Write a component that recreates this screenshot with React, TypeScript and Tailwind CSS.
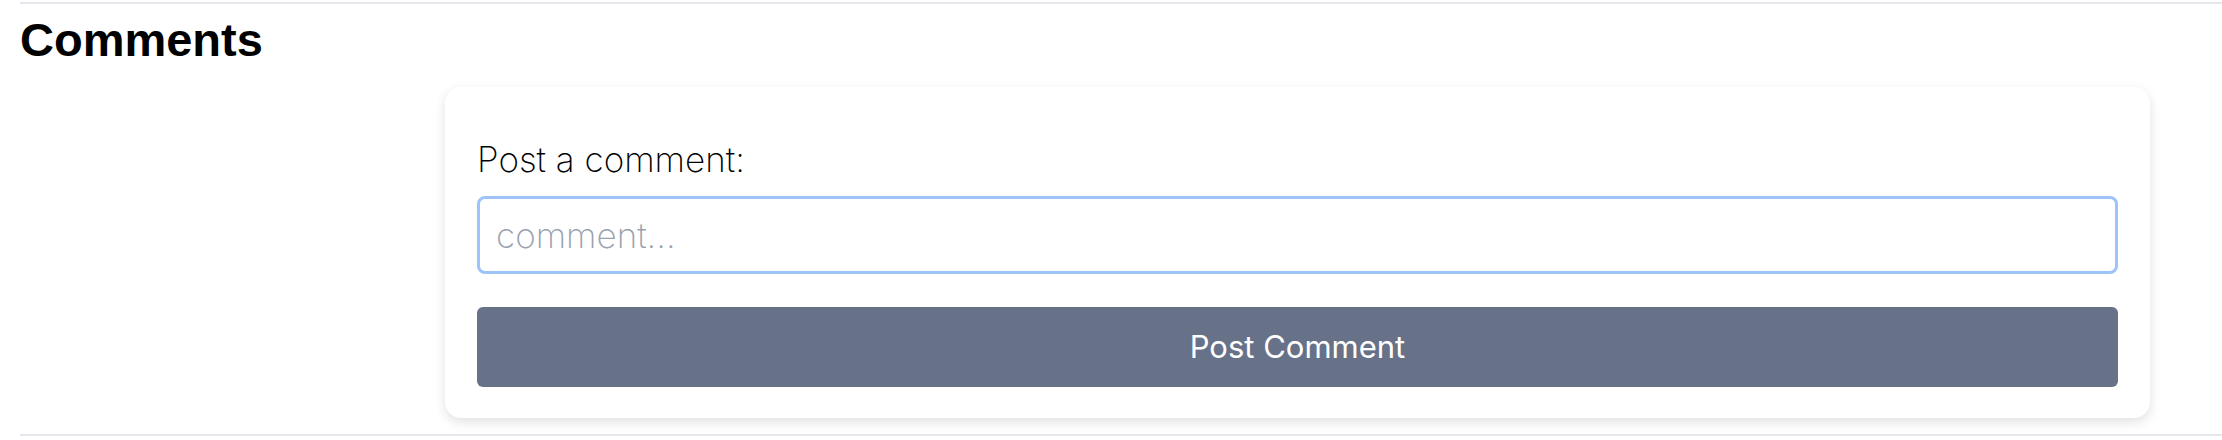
import { useState } from "react";

export default function App() {
  const [comment, setComment] = useState("");

  return (
    <div className="min-h-[440px] bg-white pt-[2px] pl-5">
      <div className="border-t-2 border-[#e6e6ec]" />
      <h2 className="mt-3 text-[47px] font-bold leading-none text-black font-['Liberation_Sans',Arial,sans-serif]">
        Comments
      </h2>

      {/* comment form card */}
      <div className="mt-6 ml-[425px] mr-[72px] rounded-2xl bg-white px-8 pt-[55px] pb-[31px] shadow-[0_4px_12px_rgba(0,0,0,0.12)] font-['Inter',sans-serif]">
        <label className="block text-[35px] font-extralight leading-none text-black">Post a comment:</label>
        <input
          value={comment}
          onChange={e => setComment(e.target.value)}
          placeholder="comment..."
          className="mt-[19px] block h-[78px] w-full rounded-lg border-[3px] border-[#9dc3f8] px-[16px] py-0 text-[35px] font-extralight text-gray-800 placeholder:text-[#9aa1ae] focus:outline-none"
        />
        <button
          onClick={() => setComment("")}
          className="mt-[33px] flex h-20 w-full items-center justify-center rounded-md bg-[#677289] text-[31px] text-white"
        >
          Post Comment
        </button>
      </div>

      <div className="mt-4 border-t-2 border-[#e6e6ec]" />
    </div>
  );
}
